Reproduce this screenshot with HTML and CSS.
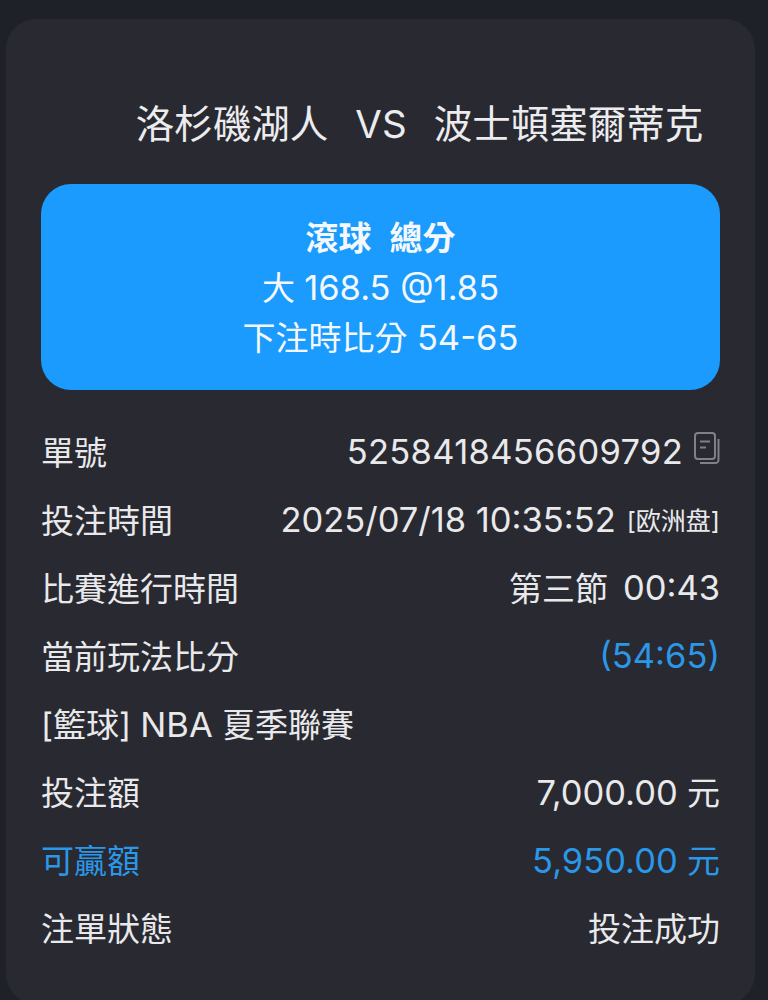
FILE: index.html
```
<!DOCTYPE html>
<html lang="zh-Hant">
<head>
<meta charset="utf-8">
<title>注單詳情</title>
<link rel="stylesheet" href="styles.css">
</head>
<body>
<main class="card">
  <h1 class="title"><span>洛杉磯湖人</span><span>VS</span><span>波士頓塞爾蒂克</span></h1>
  <section class="banner">
    <div class="banner-head"><span>滾球</span><span>總分</span></div>
    <div class="banner-line">大 <span class="num">168.5 @1.85</span></div>
    <div class="banner-line">下注時比分 <span class="num">54-65</span></div>
  </section>
  <section class="rows">
    <div class="row"><span>單號</span><span class="value"><span class="num id">5258418456609792</span>
      <svg class="copy" viewBox="0 0 26 33" width="26" height="33" fill="none" stroke="#7f818a" stroke-width="2"><rect x="1" y="1" width="20" height="26" rx="3"/><path d="M6 9.5h10M6 15.5h6"/><path d="M24.5 7v21a3 3 0 0 1-3 3H6"/></svg></span></div>
    <div class="row"><span>投注時間</span><span class="value"><span class="num">2025/07/18 10:35:52</span><span class="tag">[欧洲盘]</span></span></div>
    <div class="row"><span>比賽進行時間</span><span class="value period"><span>第三節</span><span class="num">00:43</span></span></div>
    <div class="row"><span>當前玩法比分</span><span class="num accent">(54:65)</span></div>
    <div class="row"><span>[籃球] <span class="num">NBA</span> 夏季聯賽</span></div>
    <div class="row"><span>投注額</span><span><span class="num">7,000.00</span> 元</span></div>
    <div class="row accent"><span>可贏額</span><span><span class="num">5,950.00</span> 元</span></div>
    <div class="row"><span>注單狀態</span><span>投注成功</span></div>
  </section>
</main>
</body>
</html>
```
FILE: styles.css
```
* { box-sizing: border-box; }
html, body { margin: 0; height: 1000px; overflow: hidden; }
body {
  background: #1e2128;
  color: #e9e9ec;
  font-family: Inter, "Noto Sans CJK TC", sans-serif;
  padding: 19px 13px 0 6px;
}
.card {
  height: 985px;
  background: #282931;
  border-radius: 30px;
  padding: 80px 35px 0;
}
.title {
  margin: 0;
  display: flex;
  justify-content: center;
  gap: 27px;
  padding-left: 78px;
  font-size: 38.5px;
  font-weight: 400;
  line-height: 50px;
  color: #ececef;
}
.banner {
  margin-top: 35px;
  height: 206px;
  border-radius: 30px;
  background: #1a9bfd;
  color: #f4f8fc;
  display: flex;
  flex-direction: column;
  align-items: center;
  padding-top: 29px;
  font-size: 33px;
  line-height: 50px;
}
.banner-head { display: flex; gap: 18px; font-weight: 700; }
.rows { margin-top: 27px; }
.row {
  height: 68px;
  display: flex;
  justify-content: space-between;
  align-items: center;
  font-size: 33px;
  white-space: nowrap;
}
.num { font-size: 34.5px; }
.id { letter-spacing: 0.3px; }
.value { display: flex; align-items: center; gap: 11px; }
.period { gap: 15px; }
.tag { font-size: 25px; }
.accent { color: #2b97e8; }
.copy { display: block; margin-top: -6px; }
```
